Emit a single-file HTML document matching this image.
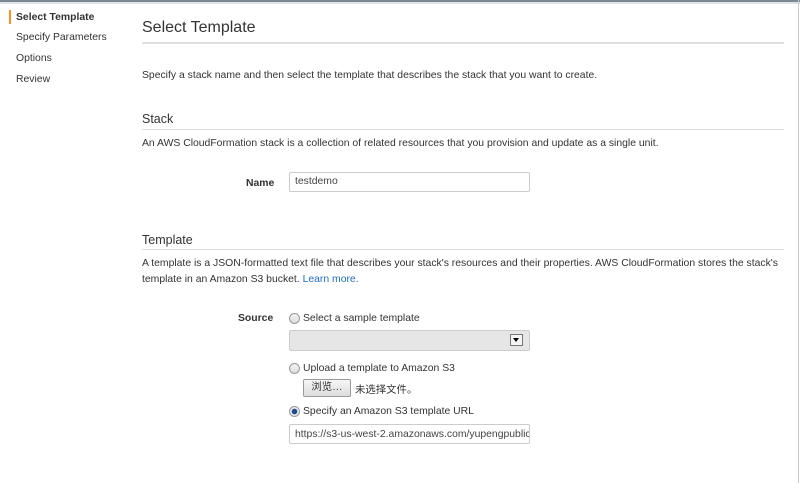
<!DOCTYPE html>
<html><head><style>
body{margin:0;width:800px;height:483px;background:#fff;font-family:"Liberation Sans","Noto Sans CJK SC",sans-serif;color:#333;position:relative;overflow:hidden;font-size:10.4px}
.a{position:absolute;white-space:nowrap}
.top{position:absolute;left:0;top:0;width:800px;height:2px;background:#7d8791}
.top2{position:absolute;left:0;top:2px;width:800px;height:2px;background:#dfe3e8}
.rv{position:absolute;right:1px;top:0;width:1px;height:483px;background:#ccc}
.nav{font-size:10.4px;color:#333}
.rule{position:absolute;left:142px;width:642px;height:1px;background:#ddd}
.inp{position:absolute;border:1px solid #ccc;border-radius:2px;background:#fff;box-sizing:border-box}
.radio{position:absolute;width:11px;height:11px;border-radius:50%;border:1px solid #999;box-sizing:border-box;background:linear-gradient(#f4f4f4,#dcdcdc)}
</style></head><body>
<div class="top"></div><div class="top2"></div><div class="rv"></div>
<div class="a" style="left:9px;top:10px;width:2px;height:14px;background:#f7931e"></div>
<div class="a nav" style="left:16px;top:12px;font-weight:bold">Select Template</div>
<div class="a nav" style="left:16px;top:32px">Specify Parameters</div>
<div class="a nav" style="left:16px;top:53px">Options</div>
<div class="a nav" style="left:16px;top:74px">Review</div>

<div class="a" style="left:142px;top:19px;font-size:16px;color:#333">Select Template</div>
<div class="rule" style="top:42px;height:2px;background:#e0e0e0"></div>
<div class="a" style="left:142px;top:70px">Specify a stack name and then select the template that describes the stack that you want to create.</div>

<div class="a" style="left:142px;top:112px;font-size:12.5px">Stack</div>
<div class="rule" style="top:129px"></div>
<div class="a" style="left:142px;top:138px">An AWS CloudFormation stack is a collection of related resources that you provision and update as a single unit.</div>
<div class="a" style="left:246px;top:178px;font-weight:bold">Name</div>
<div class="inp" style="left:289px;top:172px;width:241px;height:20px"></div>
<div class="a" style="left:295px;top:176px;color:#444">testdemo</div>

<div class="a" style="left:142px;top:233px;font-size:12.5px">Template</div>
<div class="rule" style="top:249px"></div>
<div class="a" style="left:142px;top:258px">A template is a JSON-formatted text file that describes your stack's resources and their properties. AWS CloudFormation stores the stack's</div>
<div class="a" style="left:142px;top:274px">template in an Amazon S3 bucket. <span style="color:#1e6ebf">Learn more.</span></div>

<div class="a" style="left:238px;top:313px;font-weight:bold">Source</div>
<div class="radio" style="left:289px;top:313px"></div>
<div class="a" style="left:303px;top:313px">Select a sample template</div>
<div class="inp" style="left:289px;top:330px;width:241px;height:21px;background:#e6e6e6"></div>
<div class="a" style="left:510px;top:334px;width:13px;height:12px;border:1px solid #777;background:#f4f4f4;box-sizing:border-box"></div>
<div class="a" style="left:513px;top:338px;width:0;height:0;border-left:3.5px solid transparent;border-right:3.5px solid transparent;border-top:4px solid #000"></div>
<div class="radio" style="left:289px;top:363px"></div>
<div class="a" style="left:303px;top:363px">Upload a template to Amazon S3</div>
<div class="a" style="left:303px;top:379px;width:48px;height:18px;border:1px solid #999;border-radius:2px;background:linear-gradient(#f6f6f6,#ddd);box-sizing:border-box;text-align:center;line-height:16px">浏览…</div>
<div class="a" style="left:355px;top:381px">未选择文件。</div>
<div class="radio" style="left:289px;top:406px;background:radial-gradient(circle,#1a4d8c 0 2.5px,#e8e8e8 3px)"></div>
<div class="a" style="left:303px;top:406px">Specify an Amazon S3 template URL</div>
<div class="inp" style="left:289px;top:424px;width:241px;height:20px;overflow:hidden"><span class="a" style="left:5px;top:4px;color:#444">https://s3-us-west-2.amazonaws.com/yupengpublic</span></div>
</body></html>
